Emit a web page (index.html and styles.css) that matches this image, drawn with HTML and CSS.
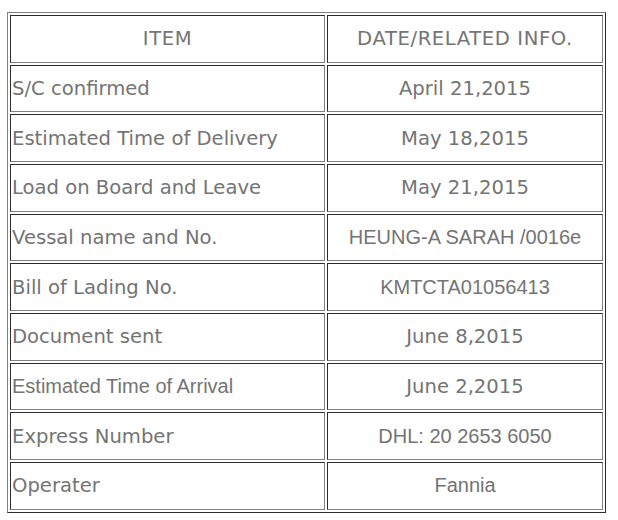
FILE: index.html
```html
<!DOCTYPE html>
<html>
<head>
<meta charset="utf-8">
<link rel="stylesheet" href="styles.css">
</head>
<body>
<div class="page">
<table class="info">
  <tr><td class="item head">ITEM</td><td class="val head">DATE/RELATED INFO.</td></tr>
  <tr><td class="item">S/C confirmed</td><td class="val">April 21,2015</td></tr>
  <tr><td class="item">Estimated Time of Delivery</td><td class="val">May 18,2015</td></tr>
  <tr><td class="item">Load on Board and Leave</td><td class="val">May 21,2015</td></tr>
  <tr><td class="item">Vessal name and No.</td><td class="val arial">HEUNG-A SARAH /0016e</td></tr>
  <tr><td class="item">Bill of Lading No.</td><td class="val arial">KMTCTA01056413</td></tr>
  <tr><td class="item">Document sent</td><td class="val">June 8,2015</td></tr>
  <tr><td class="item arial">Estimated Time of Arrival</td><td class="val">June 2,2015</td></tr>
  <tr><td class="item">Express Number</td><td class="val arial">DHL: 20 2653 6050</td></tr>
  <tr><td class="item">Operater</td><td class="val arial">Fannia</td></tr>
</table>
</div>
</body>
</html>
```
FILE: styles.css
```css
html, body {
  margin: 0;
  padding: 0;
  background: #ffffff;
}
.page {
  padding: 12px 0 0 7px;
}
.info {
  width: 599px;
  border-collapse: separate;
  border-spacing: 2px;
  border: 1px outset #808080;
  table-layout: fixed;
}
.info td {
  border: 1px inset #808080;
  height: 47.67px;
  box-sizing: border-box;
  padding: 0 1px;
  font-family: Verdana, "DejaVu Sans", sans-serif;
  font-size: 19.6px;
  color: #747474;
  vertical-align: middle;
  white-space: nowrap;
}
.info td.item {
  width: 315px;
  text-align: left;
}
.info td.head {
  text-align: center;
  letter-spacing: 0.6px;
}
.info td.val {
  text-align: center;
}
.info td.arial {
  font-family: Arial, "Liberation Sans", sans-serif;
  font-size: 20px;
}
```
